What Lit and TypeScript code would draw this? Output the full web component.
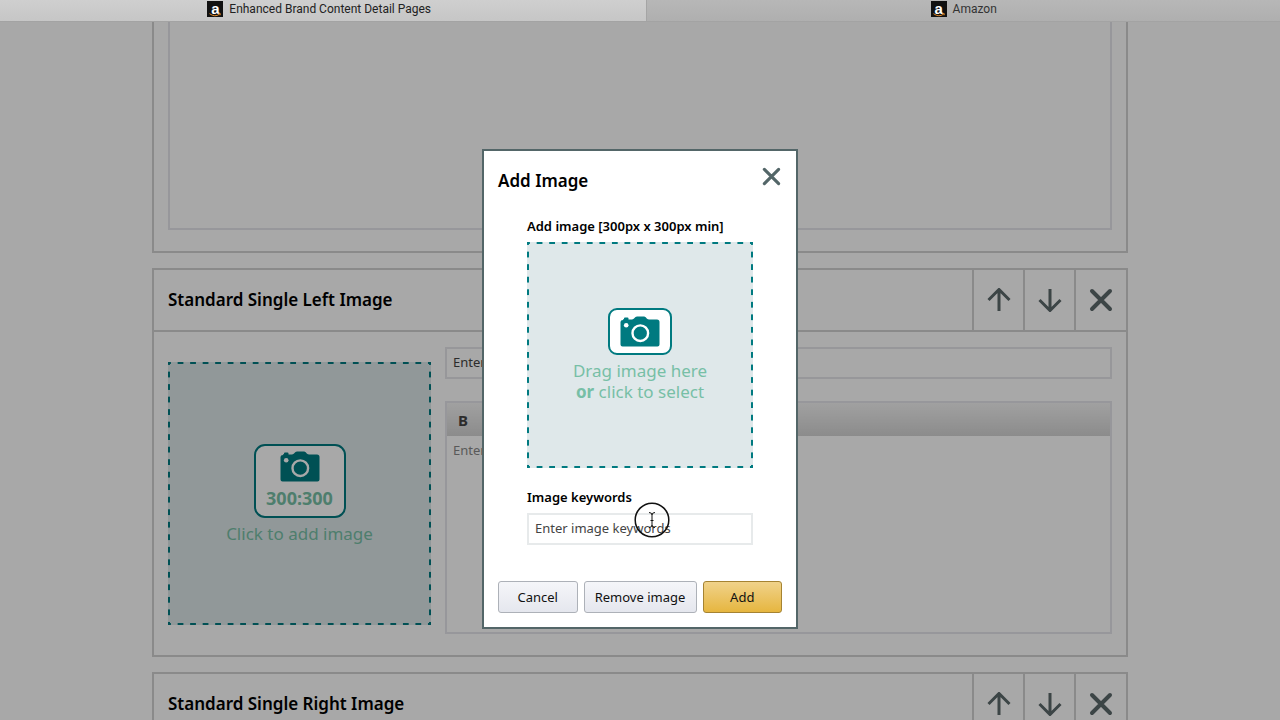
import { LitElement, html, css, svg } from "lit";
import { customElement, property } from "lit/decorators.js";

const camera = html`<svg class="camera" viewBox="0 0 40 31" aria-hidden="true">
  <path fill="currentColor" d="M3 4 Q3 3 4 3 V2.500 Q4 1.500 5 1.500 H7.500 Q8.500 1.500 8.500 2.500 V3.500 H12 Q13.500 3.300 14.500 2 L15.500 1 Q16.200 .5 17 .5 H24 Q25 .5 25.700 1.200 L27 2.700 Q28 3.500 29 3.500 H37 Q39.500 3.500 39.500 6 V28.500 Q39.500 30.500 37.500 30.500 H2.500 Q.5 30.500 .5 28.500 V6 Q.5 4 3 4 Z"/>
  <circle cx="6.200" cy="9.300" r="2.300" fill="var(--hole)"/>
  <circle cx="20.300" cy="17.200" r="7.800" fill="none" stroke="var(--hole)" stroke-width="2.400"/>
</svg>`;

const cross = svg`<path d="M3 3 L21 21 M21 3 L3 21"/>`;
const up = svg`<path d="M12 23 V1.500 M1.500 12 L12 1.500 L22.500 12"/>`;
const down = svg`<path d="M12 1 V22.500 M1.500 12 L12 22.500 L22.500 12"/>`;

const base = css`
  * { box-sizing: border-box; }
  button, input, textarea { font: inherit; color: inherit; margin: 0; }
  button { cursor: pointer; }
  h2, p { margin: 0; }
  .camera { display: block; width: 40px; height: 31px; }
  .drop {
    --teal: #007a80; --hole: #fff; --dashes: 18;
    --row: linear-gradient(90deg, var(--teal) 25%, transparent 25% 75%, var(--teal) 75%);
    --column: linear-gradient(var(--teal) 25%, transparent 25% 75%, var(--teal) 75%);
    display: flex; flex-direction: column; align-items: center; justify-content: center;
    aspect-ratio: 1; padding: 2px; border: 0; color: var(--teal);
    background-color: #dfe8ea;
    background-image: var(--row), var(--row), var(--column), var(--column);
    background-position: left top, left bottom, left top, right top;
    background-repeat: repeat-x, repeat-x, repeat-y, repeat-y;
    background-size:
      calc(100% / var(--dashes)) 2px, calc(100% / var(--dashes)) 2px,
      2px calc(100% / var(--dashes)), 2px calc(100% / var(--dashes));
  }
  .hint { color: #77bfa6; font-size: 17px; line-height: 21px; }
`;

@customElement("site-tab")
class SiteTab extends LitElement {
  @property() label = "";
  static styles = css`
    :host { display: flex; justify-content: center; min-width: 0; }
    a { display: flex; align-items: center; gap: 6px; height: 18px; color: inherit; text-decoration: none; }
    .logo { position: relative; width: 16px; height: 16px; background: #111; color: #fff; font: bold 15px/15px "Liberation Sans", sans-serif; text-align: center; }
    .smile { position: absolute; left: 2px; bottom: 0; width: 12px; height: 4px; }
  `;
  render() {
    return html`<a href="#"><span class="logo">a<svg class="smile" viewBox="0 0 12 4" aria-hidden="true"><path d="M.5 .7 Q6 4.500 10.500 1.200 M9.500 .7 H11.300 L11 2.300" fill="none" stroke="#e08a2c"/></svg></span>${this.label}</a>`;
  }
}

@customElement("content-module")
class ContentModule extends LitElement {
  @property() heading = "";
  static styles = [base, css`
    :host { display: block; border: 2px solid #d2d2d2; }
    .head { display: flex; height: 62px; border-bottom: 2px solid #d2d2d2; }
    h2 { flex: 1; align-self: center; padding-left: 14px; font-size: 17px; line-height: 24px; font-weight: 600; color: #000; }
    .tool { display: grid; place-items: center; width: 51px; padding: 0; border: 0; border-left: 2px solid #d2d2d2; background: none; color: #5c696b; }
    .tool:last-child { width: 52px; }
    .tool svg { width: 24px; height: 24px; fill: none; stroke: currentColor; stroke-width: 3; }
    .tool .heavy { stroke-width: 4; stroke-linecap: round; }
  `];
  render() {
    return html`
      <div class="head">
        <h2>${this.heading}</h2>
        <button class="tool" aria-label="Move up"><svg viewBox="0 0 24 24">${up}</svg></button>
        <button class="tool" aria-label="Move down"><svg viewBox="0 0 24 24">${down}</svg></button>
        <button class="tool" aria-label="Remove"><svg class="heavy" viewBox="0 0 24 24">${cross}</svg></button>
      </div>
      <slot></slot>`;
  }
}

@customElement("add-image-dialog")
class AddImageDialog extends LitElement {
  static styles = [base, css`
    :host { display: block; width: 316px; border: 2px solid #536668; background: #fff; padding: 14px; color: #111; }
    .top { display: flex; justify-content: space-between; align-items: flex-start; height: 52px; }
    h2 { font-size: 17px; line-height: 24px; font-weight: 600; padding-top: 4px; color: #000; }
    .close { display: grid; padding: 2px 1px; border: 0; background: none; color: #536668; }
    .close svg { width: 19px; height: 19px; fill: none; stroke: currentColor; stroke-width: 4; stroke-linecap: round; }
    .form { padding: 0 29px; }
    label, .caption { display: block; font-size: 13px; line-height: 18px; font-weight: 600; color: #000; }
    .drop { width: 100%; margin: 7px 0 20px; }
    .frame { display: grid; place-items: center; width: 64px; height: 47px; margin-bottom: 5px; border: 2px solid #007a80; border-radius: 9px; background: #fff; }
    input { display: block; width: 100%; height: 32px; margin-top: 7px; padding: 0 6px 2px; border: 2px solid #e7eaeb; background: #fff; font-size: 13px; outline: 0; }
    input::placeholder { color: #444; opacity: 1; }
    .actions { display: flex; gap: 6px; margin-top: 36px; }
    .act { flex: 1; height: 32px; padding: 0; border: 1px solid #adb1b8; border-radius: 3px; background: linear-gradient(#f5f6f9, #e5e7ee); font-size: 13px; color: #111; }
    .wide { flex: 0 0 113px; }
    .main { border-color: #a58332; background: linear-gradient(#f0d28a, #e6b640); }
  `];
  render() {
    return html`
      <div class="top">
        <h2>Add Image</h2>
        <button class="close" aria-label="Close"><svg viewBox="0 0 24 24">${cross}</svg></button>
      </div>
      <div class="form">
        <p class="caption">Add image [300px x 300px min]</p>
        <button class="drop">
          <span class="frame">${camera}</span>
          <span class="hint">Drag image here</span>
          <span class="hint"><b>or</b> click to select</span>
        </button>
        <label for="keywords">Image keywords</label>
        <input id="keywords" placeholder="Enter image keywords">
      </div>
      <div class="actions">
        <button class="act">Cancel</button>
        <button class="act wide">Remove image</button>
        <button class="act main">Add</button>
      </div>`;
  }
}

@customElement("app-root")
class AppRoot extends LitElement {
  static styles = [base, css`
    :host { display: flex; flex-direction: column; position: relative; height: 100vh; overflow: hidden; background: #fff; font-family: "Noto Sans", sans-serif; color: #111; }
    .tabs { display: flex; flex: none; height: 22px; border-bottom: 1px solid #a3a3a3; background: #b3b3b3; font: 12px Roboto, sans-serif; color: #333; }
    .tab { flex: 1; background: linear-gradient(#b7b7b7, #afafaf); border-left: 1px solid #a5a5a5; }
    .current { flex: 0 0 50.5%; padding-right: 8px; border-left: 0; background: linear-gradient(#cfcfcf, #c6c6c6); color: #222; }
    .page { flex: 1; min-height: 0; overflow: hidden; padding: 0 16px; }
    .list { display: flex; flex-direction: column; gap: 15px; max-width: 976px; margin: 0 auto; }
    .first { height: 231px; padding: 0 14px 21px; border: 2px solid #d2d2d2; border-top: 0; }
    .blank { display: block; width: 100%; height: 100%; border: 2px solid #e5e5ec; border-top: 0; resize: none; background: none; }
    .body { display: grid; grid-template-columns: 263px 1fr; gap: 14px; padding: 15px 14px 21px; }
    .photo { --dashes: 21; align-self: start; margin-top: 15px; background-color: #dce7e9; }
    .frame { display: flex; flex-direction: column; align-items: center; width: 92px; height: 74px; padding-top: 5px; margin-bottom: 5px; border: 2px solid #007a80; border-radius: 11px; background: #fff; }
    .size { font-size: 18px; line-height: 33px; font-weight: 700; color: #77bfa6; }
    .headline { display: block; width: 100%; height: 32px; margin-bottom: 22px; padding: 0 6px 2px; border: 2px solid #e5e5ea; background: none; font-size: 13px; }
    .headline::placeholder { color: #444; opacity: 1; }
    .editor { border: 2px solid #e5e5ec; height: 233px; display: flex; flex-direction: column; }
    .bar { height: 33px; background: linear-gradient(#f4f4f4, #d4d4d4); }
    .bold { height: 33px; padding: 0 11px; border: 0; background: none; font-size: 15px; font-weight: 700; color: #444; }
    .copy { flex: 1; width: 100%; padding: 4px 6px; border: 0; resize: none; background: none; font-size: 13px; line-height: 20px; }
    .copy::placeholder { color: #888; opacity: 1; }
    .shade { position: absolute; inset: 22px 0 0; display: flex; justify-content: center; align-items: flex-start; padding-top: 127px; background: rgba(0, 0, 0, .34); }
    .popup { position: relative; }
    .pointer { position: absolute; left: 152px; top: 353px; width: 36px; height: 36px; pointer-events: none; }
  `];
  render() {
    return html`
      <nav class="tabs">
        <site-tab class="tab current" label="Enhanced Brand Content Detail Pages"></site-tab>
        <site-tab class="tab" label="Amazon"></site-tab>
      </nav>
      <main class="page">
        <div class="list">
          <section class="first"><textarea class="blank" aria-label="Description"></textarea></section>
          <content-module heading="Standard Single Left Image">
            <div class="body">
              <button class="drop photo">
                <span class="frame">${camera}<span class="size">300:300</span></span>
                <span class="hint">Click to add image</span>
              </button>
              <div>
                <input class="headline" aria-label="Headline" placeholder="Enter">
                <div class="editor">
                  <div class="bar"><button class="bold" aria-label="Bold">B</button></div>
                  <textarea class="copy" aria-label="Body text" placeholder="Enter"></textarea>
                </div>
              </div>
            </div>
          </content-module>
          <content-module heading="Standard Single Right Image"></content-module>
        </div>
      </main>
      <div class="shade">
        <div class="popup">
          <add-image-dialog role="dialog" aria-label="Add Image"></add-image-dialog>
          <svg class="pointer" viewBox="0 0 36 36" aria-hidden="true">
            <g fill="none" stroke="#111"><circle cx="18" cy="18" r="16.800" stroke-width="1.500"/><path d="M15 10.500 Q18 10.500 18 13 V23 Q18 25.500 15 25.500 M21 10.500 Q18 10.500 18 13 M21 25.500 Q18 25.500 18 23 M16.500 18.500 H19.500"/></g>
          </svg>
        </div>
      </div>`;
  }
}
